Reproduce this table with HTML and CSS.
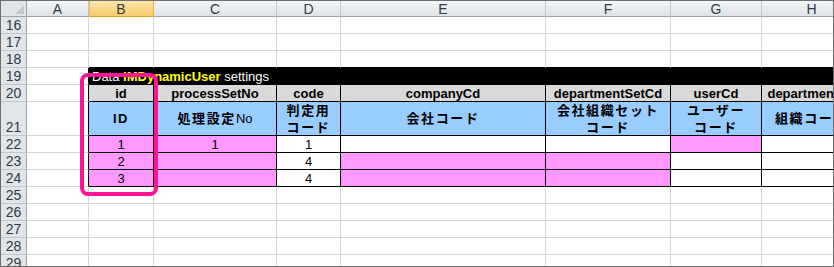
FILE: index.html
```html
<!DOCTYPE html>
<html lang="ja">

<head>
  <meta charset="UTF-8">
  <meta name="viewport" content="width=device-width, initial-scale=1.0">
  <title>IMDynamicUser settings</title>
  <link rel="stylesheet" href="styles.css">
</head>

<body>
  <div class="window">
    <div class="sheet">
      <!-- column letters -->
      <div class="corner"><span class="corner-mark"></span></div>
      <div class="col-head">A</div>
      <div class="col-head sel">B</div>
      <div class="col-head">C</div>
      <div class="col-head">D</div>
      <div class="col-head">E</div>
      <div class="col-head">F</div>
      <div class="col-head">G</div>
      <div class="col-head">H</div>

      <div class="row-head">16</div>
      <div></div><div></div><div></div><div></div><div></div><div></div><div></div><div></div>

      <div class="row-head">17</div>
      <div></div><div></div><div></div><div></div><div></div><div></div><div></div><div></div>

      <div class="row-head">18</div>
      <div></div>
      <div class="edge-top"></div><div class="edge-top"></div><div class="edge-top"></div><div class="edge-top"></div>
      <div class="edge-top"></div><div class="edge-top"></div><div class="edge-top"></div>

      <div class="row-head">19</div>
      <div class="edge-left"></div>
      <div class="title">Data&nbsp;<b class="hl">IMDynamicUser</b>&nbsp;settings</div>

      <div class="row-head">20</div>
      <div class="edge-left"></div>
      <div class="field">id</div>
      <div class="field">processSetNo</div>
      <div class="field">code</div>
      <div class="field">companyCd</div>
      <div class="field">departmentSetCd</div>
      <div class="field">userCd</div>
      <div class="field">departmentCd</div>

      <div class="row-head tall">21</div>
      <div class="edge-left"></div>
      <div class="label">ID</div>
      <div class="label">処理設定<span class="plain">No</span></div>
      <div class="label">判定用<br>コード</div>
      <div class="label">会社コード</div>
      <div class="label">会社組織セット<br>コード</div>
      <div class="label">ユーザー<br>コード</div>
      <div class="label">組織コード</div>

      <div class="row-head">22</div>
      <div class="edge-left"></div>
      <div class="cell mark">1</div>
      <div class="cell mark">1</div>
      <div class="cell">1</div>
      <div class="cell"></div>
      <div class="cell"></div>
      <div class="cell mark"></div>
      <div class="cell"></div>

      <div class="row-head">23</div>
      <div class="edge-left"></div>
      <div class="cell mark">2</div>
      <div class="cell mark"></div>
      <div class="cell">4</div>
      <div class="cell mark"></div>
      <div class="cell mark"></div>
      <div class="cell"></div>
      <div class="cell"></div>

      <div class="row-head">24</div>
      <div class="edge-left"></div>
      <div class="cell mark">3</div>
      <div class="cell mark"></div>
      <div class="cell">4</div>
      <div class="cell mark"></div>
      <div class="cell mark"></div>
      <div class="cell"></div>
      <div class="cell"></div>

      <div class="row-head">25</div>
      <div></div><div></div><div></div><div></div><div></div><div></div><div></div><div></div>

      <div class="row-head">26</div>
      <div></div><div></div><div></div><div></div><div></div><div></div><div></div><div></div>

      <div class="row-head">27</div>
      <div></div><div></div><div></div><div></div><div></div><div></div><div></div><div></div>

      <div class="row-head">28</div>
      <div></div><div></div><div></div><div></div><div></div><div></div><div></div><div></div>

      <div class="row-head">29</div>
      <div></div><div></div><div></div><div></div><div></div><div></div><div></div><div></div>
    </div>

    <!-- highlight around the id column -->
    <div class="callout"></div>
  </div>
</body>

</html>
```

FILE: styles.css
```css
body {
  margin: 0;
  font-family: "Liberation Sans", "Noto Sans CJK JP", sans-serif;
  font-size: 13px;
  color: #000;
}

/* Outer frame of the sheet window */
.window {
  position: relative;
  width: 834px;
  height: 267px;
  box-sizing: border-box;
  border: 1px solid #6f6f6f;
  overflow: hidden;
  background: #fff;
}

/* Spreadsheet grid: row numbers, then columns A to H */
.sheet {
  display: grid;
  grid-template-columns: 26px 62px 65px 123px 64px 205px 125px 91px 100px;
  grid-template-rows: 16px repeat(5, 17px) 34px repeat(8, 17px);
}

.sheet > div {
  box-sizing: border-box;
  border-right: 1px solid #d4d4d4;
  border-bottom: 1px solid #d4d4d4;
  display: flex;
  align-items: center;
  justify-content: center;
  white-space: nowrap;
  overflow: hidden;
}

/* Headers */
.sheet > .corner {
  background: #e1e4e9;
  border-right-color: #9ea4ab;
  border-bottom-color: #9ea4ab;
  justify-content: flex-end;
  align-items: flex-end;
  padding: 0 2px 2px 0;
}

.corner-mark {
  width: 0;
  height: 0;
  border-left: 9px solid transparent;
  border-bottom: 9px solid #c3c7cd;
}

.sheet > .col-head {
  background: linear-gradient(#f3f5f7, #dfe3e8);
  border-right-color: #c2c7ce;
  border-bottom-color: #9ea4ab;
  color: #2f3a45;
  font-size: 14px;
}

.sheet > .col-head.sel {
  background: linear-gradient(#fde6ad, #f7cb6c);
  border-right-color: #eab04a;
  border-bottom-color: #e39f2c;
  box-shadow: inset 1px 0 0 #f0b84f;
}

.sheet > .row-head {
  background: #e1e4e9;
  border-right-color: #9ea4ab;
  border-bottom-color: #c3c8cf;
  color: #2f3a45;
  font-size: 14px;
}

.sheet > .row-head.tall {
  align-items: flex-end;
}

/* Data table borders */
.sheet > .edge-top {
  border-bottom-color: #000;
}

.sheet > .edge-left {
  border-right-color: #000;
}

.sheet > .title {
  grid-column: 3 / -1;
  background: #000;
  border-color: #000;
  color: #fff;
  justify-content: flex-start;
  padding-left: 3px;
}

.hl {
  color: #ffff00;
}

.sheet > .field {
  background: #d9d9d9;
  border-color: #000;
  font-weight: bold;
}

.sheet > .label {
  background: #99ccff;
  border-color: #000;
  font-weight: bold;
  letter-spacing: 1.6px;
  line-height: 17px;
  text-align: center;
}

.plain {
  font-weight: normal;
  letter-spacing: 0;
}

.sheet > .cell {
  background: #fff;
  border-color: #000;
}

.sheet > .mark {
  background: #ff99ff;
}

/* Rounded marker drawn over the id column */
.callout {
  position: absolute;
  left: 79px;
  top: 72px;
  width: 78px;
  height: 123px;
  box-sizing: border-box;
  border: 4px solid #ff1493;
  border-radius: 8px;
}
```
